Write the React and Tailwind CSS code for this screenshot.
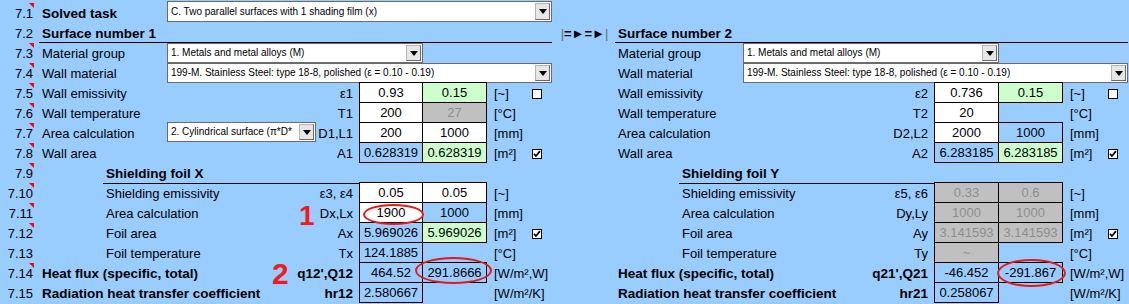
import React from 'react';

// tones for the value cells
const tone = {
    w: 'bg-white',
    g: 'bg-[#ccffcc]',
    b: 'bg-[#99ccff]',
    x: 'bg-[#c0c0c0] text-[#8e8e8e]',
};

const txt = 'pt-[2px] leading-[18px] whitespace-nowrap';

const Dropdown = ({ text, className = '', textClass = 'text-[10px] leading-[18px]' }) => (
    <div className={`flex h-5 bg-white border border-[#6a6a6a] ${className}`}>
        <div className={`flex-1 overflow-hidden whitespace-nowrap pl-[3px] ${textClass}`}>{text}</div>
        <div className="my-px mr-px flex w-[15px] items-center justify-center border border-[#b5b5b5] border-r-[#6a6a6a] border-b-[#6a6a6a] bg-[#e6e6e6]">
            <span className="h-0 w-0 border-x-[4px] border-t-[5px] border-x-transparent border-t-black" />
        </div>
    </div>
);

const Check = ({ on }) => (
    <div className="ml-[7px] mt-[6px] flex h-[10px] w-[10px] items-center justify-center border border-black bg-white">
        {on && (
            <svg viewBox="0 0 8 8" className="h-2 w-2">
                <path d="M1 3.8 L3 6 L7 1.2" stroke="black" strokeWidth="1.8" fill="none" />
            </svg>
        )}
    </div>
);

const Val = ({ cell }) => {
    if (!cell) return <div />;
    const [v, t] = cell;
    return (
        <div className={`-ml-px -mt-px flex items-center justify-center border border-black pt-px text-[13px] leading-[18px] ${tone[t]}`}>
            {v}
        </div>
    );
};

// one half of the sheet (surface 1 or surface 2)
const Side = ({ d, right }) => {
    const cols = right
        ? 'grid-cols-[128px_192px_64px_64px_38px_27px]'
        : 'grid-cols-[128px_193px_63px_64px_38px_27px]';
    if (!d) return <div className={`grid h-5 ${cols}`} />;
    const bold = d.bold ? 'font-bold text-[13.5px]' : 'text-[13px]';
    return (
        <div className={`grid h-5 ${cols}`}>
            <div className={`${txt} ${bold} ${d.indent ? 'pl-[67px]' : 'pl-[3px]'}`}>{d.label}</div>
            <div className="flex items-start justify-between pr-[7px]">
                {d.drop ? <Dropdown className="-mt-px w-[149px]" text={d.drop} /> : <span />}
                <span className={`${txt} ${bold}`}>{d.s}</span>
            </div>
            <Val cell={d.v1} />
            <Val cell={d.v2} />
            <div className={`${txt} pl-[7px] text-[13px]`}>{d.u}</div>
            <div>{d.chk !== undefined && <Check on={d.chk} />}</div>
        </div>
    );
};

const Num = ({ n, tri }) => (
    <div className={`relative w-[39px] shrink-0 pr-[6px] text-right text-[13px] ${txt}`}>
        {n}
        {tri && (
            <span className="absolute right-[5px] top-0 h-0 w-0 border-l-[5px] border-t-[5px] border-l-transparent border-t-[#ff0000]" />
        )}
    </div>
);

const Row = ({ n, tri, sep, children }) => (
    <div className="flex h-5">
        <Num n={n} tri={tri} />
        {children[0]}
        <div className={`w-[63px] shrink-0 pl-[2px] text-center text-[13px] font-bold ${txt}`}>{sep}</div>
        {children[1]}
    </div>
);

const rows = [
    {
        n: '7.5', tri: true,
        L: { label: 'Wall emissivity', s: 'ε1', v1: ['0.93', 'w'], v2: ['0.15', 'g'], u: '[~]', chk: false },
        R: { label: 'Wall emissivity', s: 'ε2', v1: ['0.736', 'w'], v2: ['0.15', 'g'], u: '[~]', chk: false },
    },
    {
        n: '7.6', tri: true,
        L: { label: 'Wall temperature', s: 'T1', v1: ['200', 'w'], v2: ['27', 'x'], u: '[°C]' },
        R: { label: 'Wall temperature', s: 'T2', v1: ['20', 'w'], u: '[°C]' },
    },
    {
        n: '7.7', tri: true,
        L: { label: 'Area calculation', drop: '2. Cylindrical surface (π*D*', s: 'D1,L1', v1: ['200', 'w'], v2: ['1000', 'w'], u: '[mm]' },
        R: { label: 'Area calculation', s: 'D2,L2', v1: ['2000', 'w'], v2: ['1000', 'b'], u: '[mm]' },
    },
    {
        n: '7.8', tri: true,
        L: { label: 'Wall area', s: 'A1', v1: ['0.628319', 'b'], v2: ['0.628319', 'g'], u: '[m²]', chk: true },
        R: { label: 'Wall area', s: 'A2', v1: ['6.283185', 'b'], v2: ['6.283185', 'g'], u: '[m²]', chk: true },
    },
];

const rows2 = [
    {
        n: '7.10', tri: true,
        L: { indent: true, label: 'Shielding emissivity', s: 'ε3, ε4', v1: ['0.05', 'w'], v2: ['0.05', 'w'], u: '[~]' },
        R: { indent: true, label: 'Shielding emissivity', s: 'ε5, ε6', v1: ['0.33', 'x'], v2: ['0.6', 'x'], u: '[~]' },
    },
    {
        n: '7.11', tri: true,
        L: { indent: true, label: 'Area calculation', s: 'Dx,Lx', v1: ['1900', 'w'], v2: ['1000', 'b'], u: '[mm]' },
        R: { indent: true, label: 'Area calculation', s: 'Dy,Ly', v1: ['1000', 'x'], v2: ['1000', 'x'], u: '[mm]' },
    },
    {
        n: '7.12', tri: true,
        L: { indent: true, label: 'Foil area', s: 'Ax', v1: ['5.969026', 'b'], v2: ['5.969026', 'g'], u: '[m²]', chk: true },
        R: { indent: true, label: 'Foil area', s: 'Ay', v1: ['3.141593', 'x'], v2: ['3.141593', 'x'], u: '[m²]', chk: true },
    },
    {
        n: '7.13',
        L: { indent: true, label: 'Foil temperature', s: 'Tx', v1: ['124.1885', 'b'], u: '[°C]' },
        R: { indent: true, label: 'Foil temperature', s: 'Ty', v1: ['~', 'x'], u: '[°C]' },
    },
    {
        n: '7.14', tri: true,
        L: { bold: true, label: 'Heat flux (specific, total)', s: "q12',Q12", v1: ['464.52', 'b'], v2: ['291.8666', 'b'], u: '[W/m²,W]' },
        R: { bold: true, label: 'Heat flux (specific, total)', s: "q21',Q21", v1: ['-46.452', 'b'], v2: ['-291.867', 'b'], u: '[W/m²,W]' },
    },
    {
        n: '7.15',
        L: { bold: true, label: 'Radiation heat transfer coefficient', s: 'hr12', v1: ['2.580667', 'b'], u: '[W/m²/K]' },
        R: { bold: true, label: 'Radiation heat transfer coefficient', s: 'hr21', v1: ['0.258067', 'b'], u: '[W/m²/K]' },
    },
];

const App = () => {
    return (
        <div className="relative h-[304px] w-[1129px] overflow-hidden bg-[#99ccff] pt-[3px] font-['Liberation_Sans',Arial,sans-serif] text-black">
            {/* 7.1 */}
            <Row n="7.1" tri>
                <div className="grid h-5 w-[513px] grid-cols-[128px_385px]">
                    <div className={`${txt} pl-[3px] text-[13.5px] font-bold`}>Solved task</div>
                    <Dropdown
                        className="-mt-[2px] h-[21px]"
                        textClass="text-[10px] leading-[19px]"
                        text="C. Two parallel surfaces with 1 shading film (x)"
                    />
                </div>
                <div className="w-[513px]" />
            </Row>

            {/* 7.2 */}
            <Row n="7.2" sep={<span><span className="font-normal text-[#6e6e50]">|</span>=►=►<span className="font-normal text-[#6e6e50]">|</span></span>}>
                <div className={`w-[513px] border-b border-black pl-[3px] text-[13.5px] font-bold ${txt}`}>Surface number 1</div>
                <div className={`w-[513px] border-b border-black pl-[3px] text-[13.5px] font-bold ${txt}`}>Surface number 2</div>
            </Row>

            {/* 7.3 */}
            <Row n="7.3" tri>
                <div className="grid h-5 w-[513px] grid-cols-[128px_256px]">
                    <div className={`${txt} pl-[3px] text-[13px]`}>Material group</div>
                    <Dropdown text="1. Metals and metal alloys (M)" />
                </div>
                <div className="grid h-5 w-[513px] grid-cols-[128px_256px]">
                    <div className={`${txt} pl-[3px] text-[13px]`}>Material group</div>
                    <Dropdown text="1. Metals and metal alloys (M)" />
                </div>
            </Row>

            {/* 7.4 */}
            <Row n="7.4" tri>
                <div className="grid h-5 w-[513px] grid-cols-[128px_385px]">
                    <div className={`${txt} pl-[3px] text-[13px]`}>Wall material</div>
                    <Dropdown text="199-M. Stainless Steel: type 18-8, polished (ε = 0.10 - 0.19)" />
                </div>
                <div className="grid h-5 w-[513px] grid-cols-[128px_385px]">
                    <div className={`${txt} pl-[3px] text-[13px]`}>Wall material</div>
                    <Dropdown text="199-M. Stainless Steel: type 18-8, polished (ε = 0.10 - 0.19)" />
                </div>
            </Row>

            {rows.map((r) => (
                <Row key={r.n} n={r.n} tri={r.tri}>
                    <Side d={r.L} />
                    <Side d={r.R} right />
                </Row>
            ))}

            {/* 7.9 */}
            <Row n="7.9" tri>
                <div className="w-[513px]">
                    <div className={`ml-[64px] w-[384px] border-b border-black pl-[3px] text-[13.5px] font-bold ${txt}`}>Shielding foil X</div>
                </div>
                <div className="w-[513px]">
                    <div className={`ml-[64px] w-[384px] border-b border-black pl-[3px] text-[13.5px] font-bold ${txt}`}>Shielding foil Y</div>
                </div>
            </Row>

            {rows2.map((r) => (
                <Row key={r.n} n={r.n} tri={r.tri}>
                    <Side d={r.L} />
                    <Side d={r.R} right />
                </Row>
            ))}

            {/* red annotations drawn over the sheet */}
            <span className="absolute left-[299px] top-[202px] text-[28px] font-bold leading-none text-[#ee1c1c]">1</span>
            <span className="absolute left-[272px] top-[259px] text-[30px] font-bold leading-none text-[#ee1c1c]">2</span>
            <div className="absolute left-[363px] top-[204px] h-[21px] w-[61px] rounded-[50%] border-[2.5px] border-[#e81818]" />
            <div className="absolute left-[415px] top-[257px] h-[27px] w-[77px] rounded-[50%] border-[2.5px] border-[#e81818]" />
            <div className="absolute left-[997px] top-[259px] h-[28px] w-[69px] rounded-[50%] border-[2.5px] border-[#e81818]" />
        </div>
    );
};

export default App;
